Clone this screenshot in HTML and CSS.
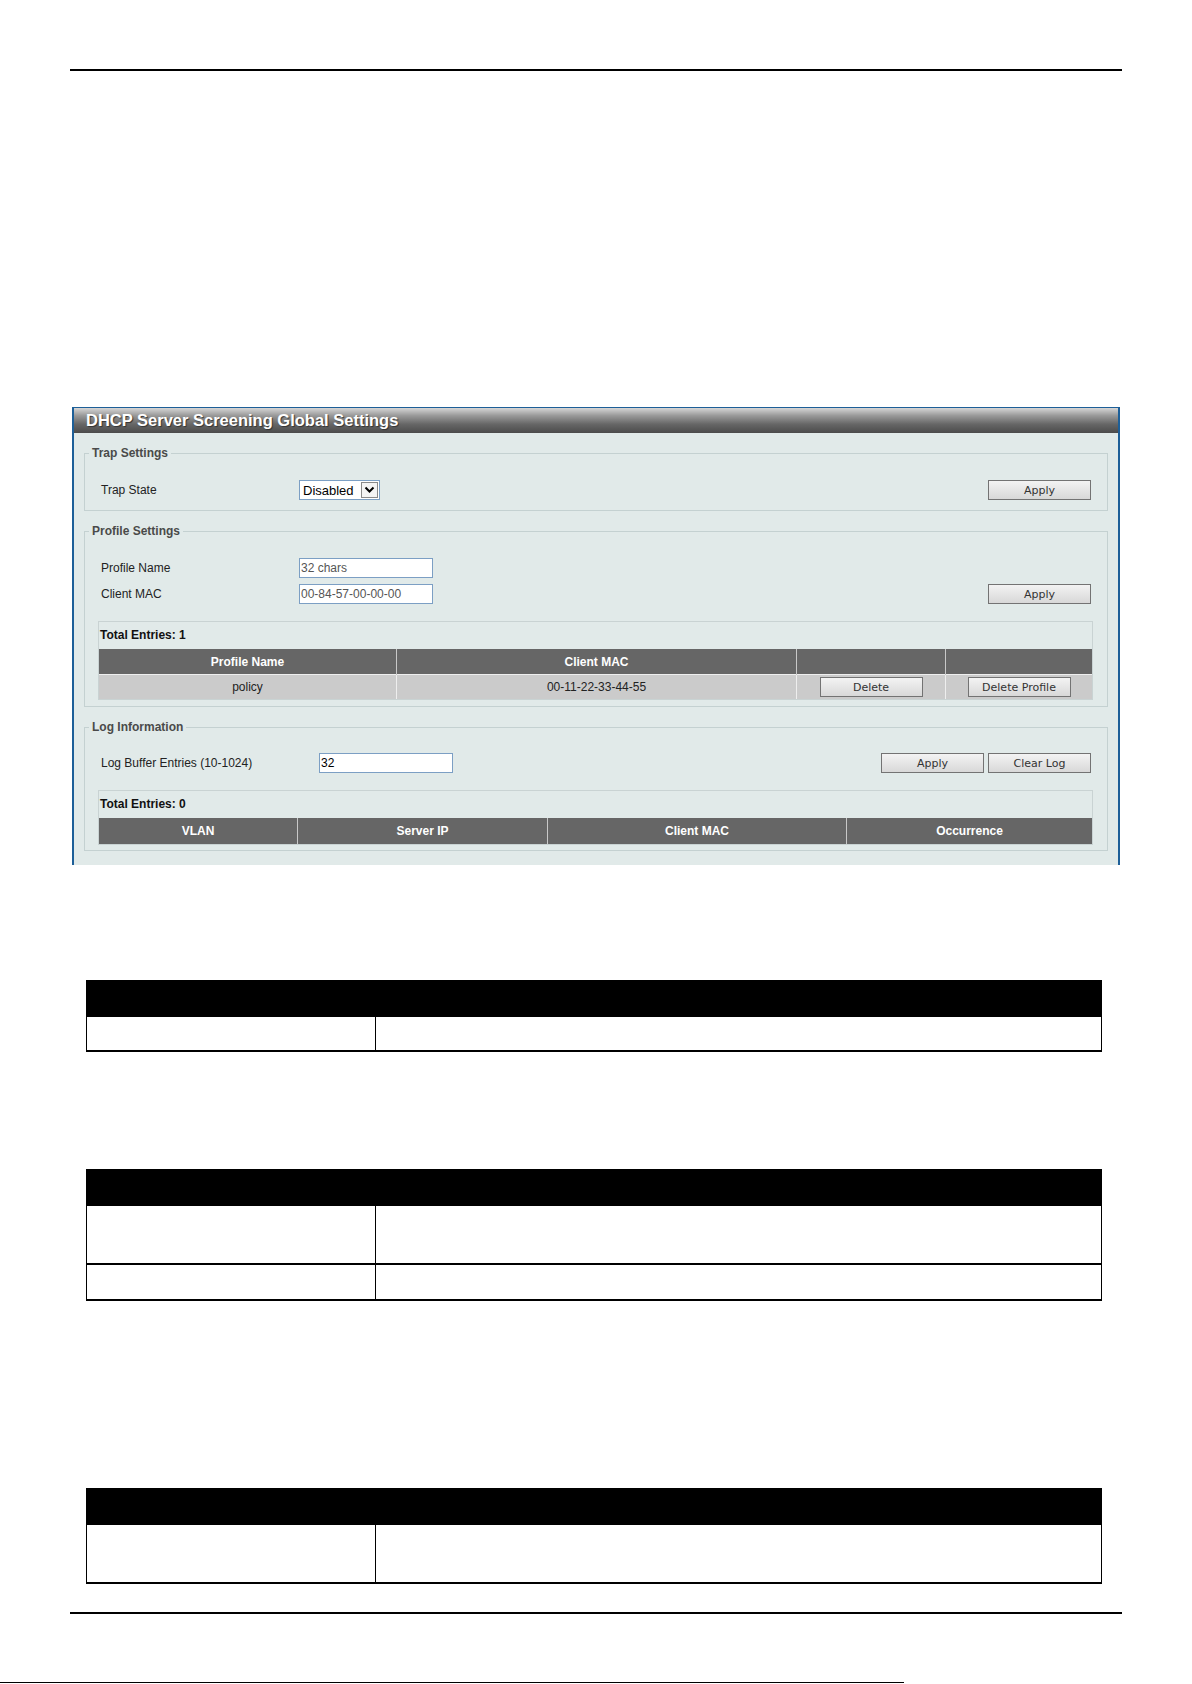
FILE: index.html
```html
<!DOCTYPE html>
<html lang="en">
<head>
    <meta charset="UTF-8">
    <title>DHCP Server Screening Global Settings</title>
    <link rel="stylesheet" href="styles.css">
</head>
<body>

    <div class="page">
        <div class="rule rule-top"></div>

        <!-- Settings window -->
        <div class="panel">
            <div class="panel-title">DHCP Server Screening Global Settings</div>

            <fieldset class="group group-trap">
                <legend>Trap Settings</legend>
                <div class="row">
                    <span class="label">Trap State</span>
                    <div class="select">
                        <span class="select-text">Disabled</span>
                        <span class="select-arrow">
                            <svg width="11" height="8" viewBox="0 0 11 8"><path d="M1.5 1.5 L5.5 5.5 L9.5 1.5" fill="none" stroke="#000" stroke-width="2"/></svg>
                        </span>
                    </div>
                    <div class="actions"><button class="btn">Apply</button></div>
                </div>
            </fieldset>

            <fieldset class="group group-profile">
                <legend>Profile Settings</legend>
                <div class="row">
                    <span class="label">Profile Name</span>
                    <input class="text hint" type="text" value="32 chars">
                </div>
                <div class="row row-next">
                    <span class="label">Client MAC</span>
                    <input class="text hint" type="text" value="00-84-57-00-00-00">
                    <div class="actions"><button class="btn">Apply</button></div>
                </div>

                <div class="box box-profile">
                    <div class="total">Total Entries: 1</div>
                    <table class="grid">
                        <tr>
                            <th class="c-name">Profile Name</th>
                            <th class="c-mac">Client MAC</th>
                            <th class="c-del"></th>
                            <th></th>
                        </tr>
                        <tr>
                            <td>policy</td>
                            <td>00-11-22-33-44-55</td>
                            <td><button class="btn">Delete</button></td>
                            <td><button class="btn">Delete Profile</button></td>
                        </tr>
                    </table>
                </div>
            </fieldset>

            <fieldset class="group group-log">
                <legend>Log Information</legend>
                <div class="row">
                    <span class="label label-wide">Log Buffer Entries (10-1024)</span>
                    <input class="text" type="text" value="32">
                    <div class="actions">
                        <button class="btn">Apply</button>
                        <button class="btn">Clear Log</button>
                    </div>
                </div>

                <div class="box box-log">
                    <div class="total">Total Entries: 0</div>
                    <table class="grid">
                        <tr>
                            <th class="c-vlan">VLAN</th>
                            <th class="c-ip">Server IP</th>
                            <th class="c-client">Client MAC</th>
                            <th>Occurrence</th>
                        </tr>
                    </table>
                </div>
            </fieldset>
        </div>

        <!-- Parameter tables -->
        <table class="doc doc-first">
            <tr><th class="d-key"></th><th></th></tr>
            <tr class="h35"><td></td><td></td></tr>
        </table>

        <table class="doc doc-second">
            <tr><th class="d-key"></th><th></th></tr>
            <tr class="h58"><td></td><td></td></tr>
            <tr class="h36"><td></td><td></td></tr>
        </table>

        <table class="doc doc-third">
            <tr><th class="d-key"></th><th></th></tr>
            <tr class="h59"><td></td><td></td></tr>
        </table>

        <div class="rule rule-bottom"></div>
        <div class="footer-line"></div>
    </div>

</body>
</html>
```

FILE: styles.css
```css
/* Page frame */
body, html {
    margin: 0;
    background: #fff;
    font-family: "Liberation Sans", Arial, sans-serif;
}

.page {
    width: 1192px;
    height: 1684px;
    overflow: hidden;
    display: flex;
    flex-direction: column;
}

.rule {
    height: 2px;
    background: #000;
    margin-left: 70px;
    width: 1052px;
    flex: none;
}

.rule-top {
    margin-top: 69px;
}

.rule-bottom {
    margin-top: 28px;
}

/* thin line along the sheet's lower edge */
.footer-line {
    margin-top: auto;
    margin-bottom: 1px;
    width: 904px;
    height: 1px;
    background: #000;
    flex: none;
}

/* Settings window */
.panel {
    margin: 336px 0 0 72px;
    width: 1048px;
    box-sizing: border-box;
    background: #e1eae9;
    border: 2px solid #1d5f98;
    border-top-width: 1px;
    border-bottom: none;
    padding-bottom: 14px;
    flex: none;
}

.panel-title {
    height: 25px;
    line-height: 24px;
    padding-left: 12px;
    color: #fff;
    font-size: 16.5px;
    font-weight: bold;
    text-shadow: 1px 1px 1px #333;
    background: linear-gradient(#d6d6d6 0%, #9a9a9a 30%, #666 65%, #4b4b4b 100%);
}

/* Field groups */
.group {
    margin: 13px 10px 0 10px;
    padding: 20px 14px 10px 13px;
    border: 1px solid #c4d1d1;
    min-width: 0;
}

.group legend {
    font-size: 12px;
    line-height: 14px;
    font-weight: bold;
    color: #4a4a4a;
    padding: 0 3px;
    margin-left: -9px;
}

.group-profile {
    padding-bottom: 6px;
}

.group-log {
    margin-top: 13px;
    padding-top: 19px;
    padding-bottom: 5px;
}

.row {
    display: flex;
    align-items: center;
    height: 20px;
    padding: 0 2px 0 3px;
}

.row-next {
    margin-top: 6px;
}

.label {
    width: 198px;
    font-size: 12px;
    color: #222;
}

.label-wide {
    width: 218px;
}

.actions {
    margin-left: auto;
    display: flex;
    gap: 4px;
}

/* Form controls */
.btn {
    width: 103px;
    height: 20px;
    padding: 0;
    border: 1px solid #737373;
    background: linear-gradient(#f3f3f3, #d8d8d8);
    font-family: "DejaVu Sans", Verdana, sans-serif;
    font-size: 11px;
    color: #333;
}

.text {
    width: 134px;
    height: 20px;
    box-sizing: border-box;
    border: 1px solid #7c9fc4;
    padding: 0 1px;
    font-family: "Liberation Sans", Arial, sans-serif;
    font-size: 12px;
    color: #000;
    background: #fff;
}

.text.hint {
    color: #555;
}

.select {
    width: 81px;
    height: 20px;
    box-sizing: border-box;
    border: 1px solid #7c9fc4;
    background: #fff;
    display: flex;
    align-items: center;
    justify-content: space-between;
    padding: 0 1px 0 3px;
}

.select-text {
    font-size: 13px;
    color: #000;
}

.select-arrow {
    width: 17px;
    height: 16px;
    box-sizing: border-box;
    border: 1px solid #8a8a8a;
    background: #f4f4f4;
    display: flex;
    align-items: center;
    justify-content: center;
}

/* Entry tables */
.box {
    border: 1px solid #c9d3d3;
}

.box-profile {
    margin-top: 17px;
}

.box-log {
    margin-top: 17px;
}

.total {
    height: 27px;
    line-height: 26px;
    padding-left: 1px;
    font-size: 12px;
    font-weight: bold;
    color: #111;
}

.grid {
    width: 100%;
    border-collapse: collapse;
    font-size: 12px;
}

.grid th {
    height: 25px;
    padding: 0;
    background: #666;
    color: #fff;
    font-weight: bold;
    border-left: 1px solid #c8c8c8;
}

.grid th:first-child,
.grid td:first-child {
    border-left: none;
}

.grid td {
    height: 24px;
    padding: 0;
    background: #cbcbcb;
    color: #222;
    text-align: center;
    border-left: 1px solid #eee;
    border-top: 1px solid #eee;
}

.box-log .grid th {
    height: 26px;
}

.c-name { width: 297px; }
.c-mac { width: 399px; }
.c-del { width: 148px; }

.c-vlan { width: 198px; }
.c-ip { width: 249px; }
.c-client { width: 298px; }

/* Parameter tables */
.doc {
    margin-left: 86px;
    width: 1016px;
    border-collapse: collapse;
    flex: none;
}

.doc th {
    height: 35px;
    padding: 0;
    background: #000;
    border: 1px solid #000;
}

.doc .d-key {
    width: 288px;
}

.doc td {
    padding: 0;
    border: 1px solid #000;
    border-bottom-width: 2px;
}

.doc-first {
    margin-top: 115px;
}

.doc-second {
    margin-top: 117px;
}

.doc-third {
    margin-top: 187px;
}

.h35 td { height: 33px; }
.h58 td { height: 57px; }
.h36 td { height: 34px; }
.h59 td { height: 57px; }
```
